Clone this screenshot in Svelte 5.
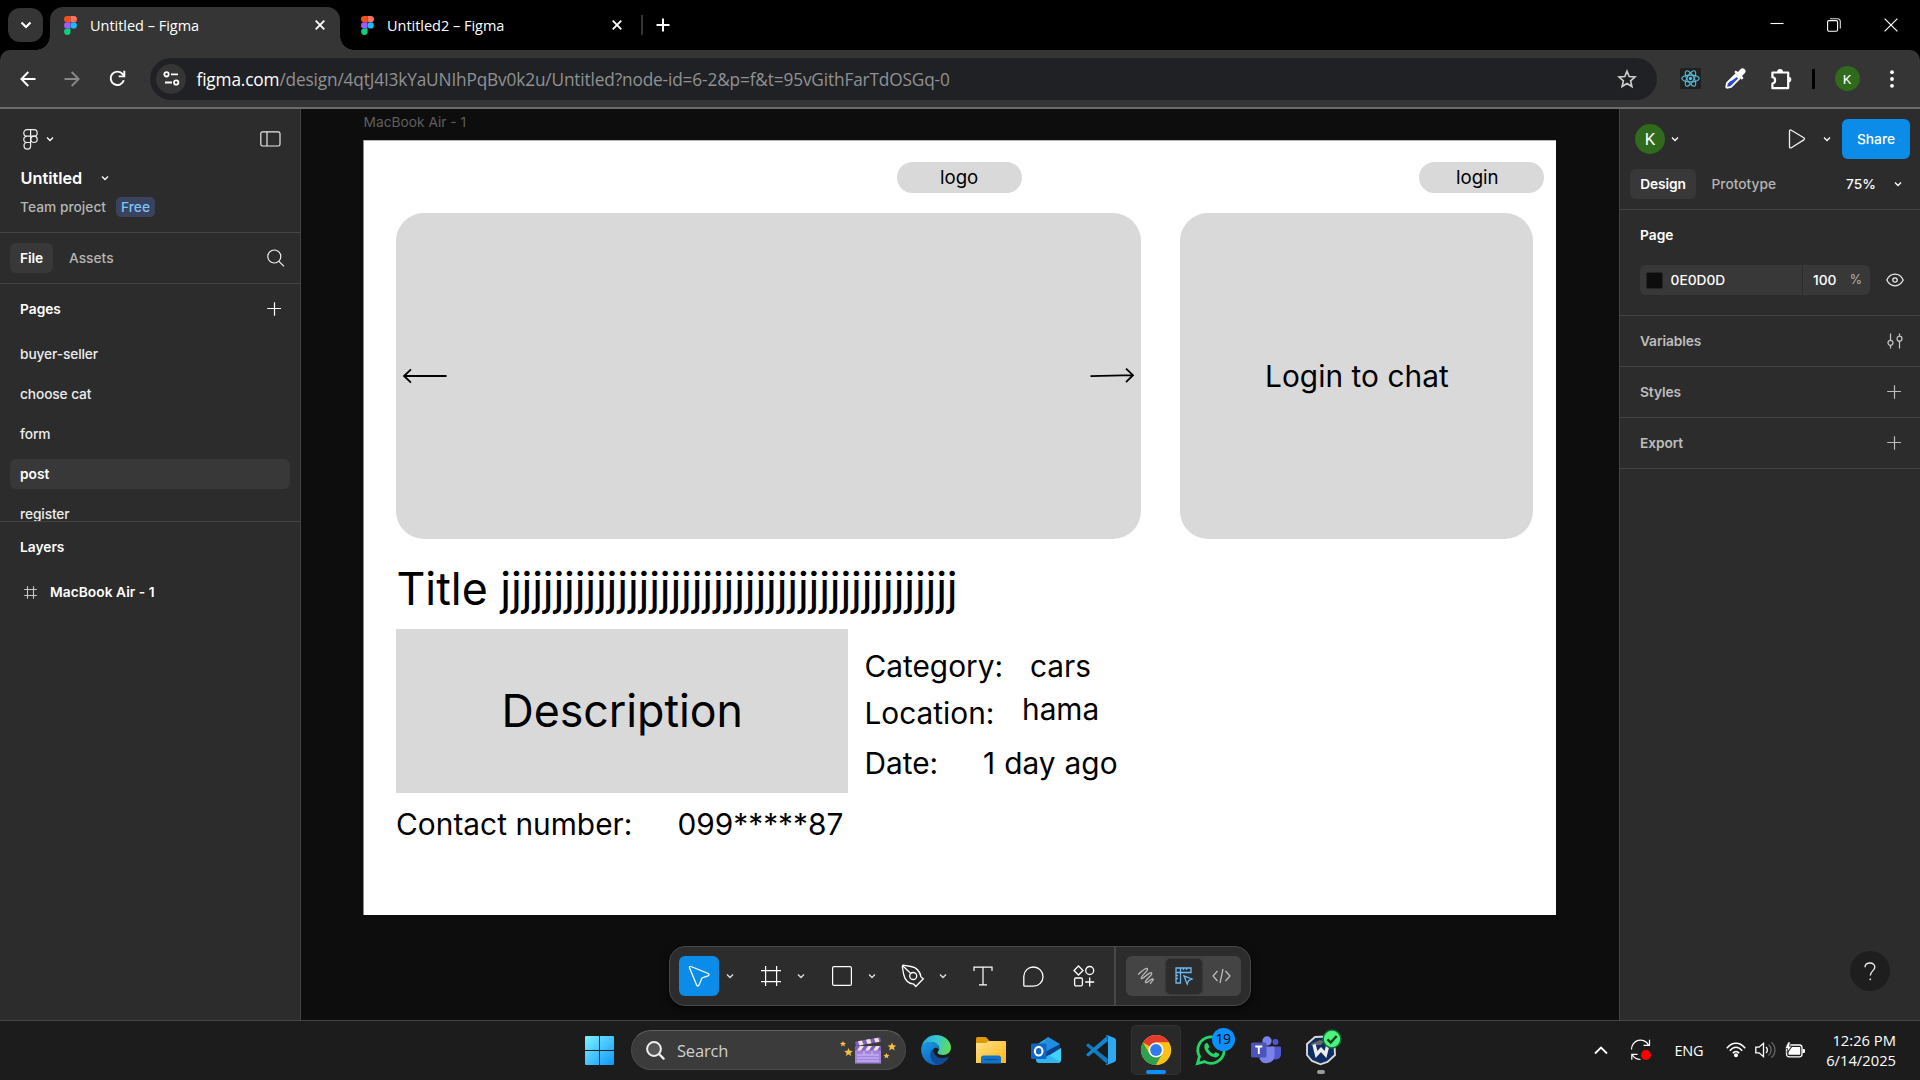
<script>
  const pages = ['buyer-seller', 'choose cat', 'form', 'post', 'register'];
  const activePage = 'post';
  const panelRows = ['Variables', 'Styles', 'Export'];
  const tabs = [
    { title: 'Untitled – Figma', active: true },
    { title: 'Untitled2 – Figma', active: false }
  ];
  const filler = 'j'.repeat(43);
</script>

{#snippet chevron()}
  <svg class="chev" width="8" height="8" viewBox="0 0 8 8"><path d="M1 2.5 4 5.5 7 2.5" fill="none" stroke="currentColor" stroke-width="1.3" /></svg>
{/snippet}

{#snippet plus()}
  <svg width="14" height="14" viewBox="0 0 14 14"><path d="M7.500 0.2V13.8M0.2 6.500H14" stroke="currentColor" stroke-width="1.2" /></svg>
{/snippet}

{#snippet figmaColor()}
  <svg width="13" height="19" viewBox="0 0 13 19">
    <path d="M3.2 0H6.5V6.3H3.2a3.15 3.15 0 0 1 0-6.3z" fill="#f24e1e" />
    <path d="M6.5 0H9.8a3.15 3.15 0 0 1 0 6.3H6.5z" fill="#ff7262" />
    <path d="M3.2 6.3H6.5v6.3H3.2a3.15 3.15 0 0 1 0-6.3z" fill="#a259ff" />
    <circle cx="9.7" cy="9.45" r="3.15" fill="#1abcfe" />
    <path d="M3.2 12.6H6.5v3.2a3.2 3.2 0 1 1-3.3-3.2z" fill="#0acf83" />
  </svg>
{/snippet}

<div class="screen">
  <header class="tabstrip">
    <div class="tabsearch"><svg width="12" height="8" viewBox="0 0 12 8"><path d="M1.5 1.5 6 6 10.5 1.5" fill="none" stroke="#fff" stroke-width="2.2" /></svg></div>
    {#each tabs as tab}
      <div class="tab" class:active={tab.active}>
        {@render figmaColor()}
        <span class="title">{tab.title}</span>
        <svg class="x" width="10" height="10" viewBox="0 0 10 10"><path d="M.7.7 9.3 9.3M9.3.7.7 9.3" stroke="#fff" stroke-width="1.8" /></svg>
      </div>
    {/each}
    <i class="tabsep"></i>
    <svg class="newtab" width="14" height="14" viewBox="0 0 14 14"><path d="M7 .5v13M.5 7h13" stroke="#fff" stroke-width="2" /></svg>
    <div class="winctl">
      <svg width="14" height="14" viewBox="0 0 14 14"><path d="M.5 5.500h13" stroke="#fff" stroke-width="1.1" /></svg>
      <svg width="14" height="14" viewBox="0 0 14 14"><rect x=".6" y="2.6" width="10" height="10.6" rx="1.5" fill="none" stroke="#fff" stroke-width="1.1" /><path d="M3 .7h7.5a2.8 2.8 0 0 1 2.8 2.8V10.500" fill="none" stroke="#ddd" stroke-width="1.1" /></svg>
      <svg width="14" height="14" viewBox="0 0 14 14"><path d="M.6.6 13.400 13.400M13.400.6.6 13.400" stroke="#fff" stroke-width="1.2" /></svg>
    </div>
  </header>

  <div class="toolbarwrap">
    <div class="addressrow">
      <svg class="back" width="16" height="16" viewBox="0 0 16 16"><path d="M15.500 8H2M8.300 1 1.400 8l6.900 7" fill="none" stroke="#fff" stroke-width="1.9" /></svg>
      <svg class="fwd" width="16" height="16" viewBox="0 0 16 16"><path d="M.5 8H14M7.700 1l6.900 7-6.900 7" fill="none" stroke="#888" stroke-width="1.9" /></svg>
      <svg class="reload" width="17" height="17" viewBox="0 0 17 17"><path d="M14.800 10.300A6.700 6.700 0 1 1 13.700 4.200L15.300 6" fill="none" stroke="#fff" stroke-width="1.9" /><path d="M15.300.8V6.400H9.700" fill="none" stroke="#fff" stroke-width="1.900" /></svg>
      <div class="omnibox">
        <div class="siteinfo">
          <svg width="17" height="15" viewBox="0 0 17 15" fill="none" stroke="#fff" stroke-width="1.800"><circle cx="3.500" cy="3.300" r="2.200" /><path d="M8 3.300h7M2 11.500h7" /><circle cx="13.200" cy="11.500" r="2.200" /></svg>
        </div>
        <span class="url"><b>figma.com</b>/design/4qtJ4I3kYaUNIhPqBv0k2u/Untitled?node-id=6-2&amp;p=f&amp;t=95vGithFarTdOSGq-0</span>
        <svg class="star" width="20" height="20" viewBox="0 0 20 20"><path d="M10 2.200 12.200 7.500 18 8l-4.400 3.800 1.300 5.700L10 14.500l-4.900 3 1.300-5.700L2 8l5.800-.5z" fill="none" stroke="#d0d0d0" stroke-width="1.600" /></svg>
      </div>
      <svg class="react" width="21" height="21" viewBox="0 0 21 21"><rect width="21" height="21" rx="1.500" fill="#202020" /><g fill="none" stroke="#53c1de" stroke-width="1.100"><ellipse cx="10.500" cy="10.500" rx="8.700" ry="3.400" /><ellipse cx="10.500" cy="10.500" rx="8.700" ry="3.400" transform="rotate(60 10.500 10.500)" /><ellipse cx="10.500" cy="10.500" rx="8.700" ry="3.400" transform="rotate(120 10.500 10.500)" /></g><circle cx="10.500" cy="10.500" r="1.700" fill="#53c1de" /></svg>
      <svg class="dropper" width="21" height="21" viewBox="0 0 21 21"><path d="M10.500 6.500 14.500 10.500 6 19 2 19.800 1.200 19 2 15z" fill="#2c48c8" stroke="#fff" stroke-width="1.800" /><path d="m4 13.500 6.500-7 2 2-5.500 4z" fill="#fff" /><path d="m9.300 4 1.500-1.500 2 1.500L15.500 1.200c1.300-1.300 3-1.300 4.200 0s1.200 2.700 0 4L17 8l1.500 2-1.700 1.700z" fill="#fff" /></svg>
      <svg class="puzzle" width="22" height="22" viewBox="0 0 22 22"><path d="M2.400 4.500H18.200V20.200H2.400V15.500c3.600-.3 3.600-6 0-6.300z" fill="none" stroke="#fff" stroke-width="2.200" stroke-linejoin="round" /><path d="M7.200 4a2.900 2.900 0 0 1 5.800 0zM18.500 8.800a2.600 2.600 0 0 1 0 5.600z" fill="#fff" /></svg>
      <i class="barsep"></i>
      <div class="avatar small">K</div>
      <svg class="kebab" width="4" height="18" viewBox="0 0 4 18" fill="#fff"><circle cx="2" cy="2.200" r="1.900" /><circle cx="2" cy="9" r="1.900" /><circle cx="2" cy="15.800" r="1.900" /></svg>
    </div>
  </div>

  <main>
    <aside class="left">
      <section class="filehead">
        <div class="row logo">
          <svg width="16" height="21" viewBox="0 0 16 21" fill="none" stroke="#f0f0f0" stroke-width="1.200"><path d="M7.600.7H4a3.200 3.200 0 0 0 0 6.400h3.600zM7.600.7H11a3.200 3.200 0 0 1 0 6.400H7.600zM7.600 7.100H4a3.200 3.200 0 0 0 0 6.400h3.600zM7.600 13.500H4a3.300 3.300 0 1 0 3.600 3.200z" /><circle cx="11" cy="10.300" r="3.200" /></svg>
          {@render chevron()}
          <svg class="end" width="21" height="16" viewBox="0 0 21 16" fill="none" stroke="#e8e8e8" stroke-width="1.200"><rect x=".8" y=".8" width="19.200" height="14.200" rx="1.800" /><path d="M7 .8V15" /></svg>
        </div>
        <div class="row name"><strong>Untitled</strong>{@render chevron()}</div>
        <div class="row team"><span>Team project</span><em>Free</em></div>
      </section>
      <section class="filetabs">
        <b>File</b><span>Assets</span>
        <svg width="18" height="18" viewBox="0 0 18 18" fill="none" stroke="#f0f0f0" stroke-width="1.200"><circle cx="7.300" cy="7.500" r="6.500" /><path d="m12 12.300 5 5" /></svg>
      </section>
      <section class="pages">
        <div class="head"><b>Pages</b>{@render plus()}</div>
        {#each pages as page}
          <div class="page" class:current={page === activePage}>{page}</div>
        {/each}
      </section>
      <section class="layers">
        <b>Layers</b>
        <div class="layer">
          <svg width="13" height="13" viewBox="0 0 13 13"><path d="M3.500.3v12.400M9.500.3v12.400M.2 3.500h12.600M.2 9.500h12.600" stroke="#c8c8c8" stroke-width="1.100" /></svg>
          <span>MacBook Air - 1</span>
        </div>
      </section>
    </aside>

    <div class="canvas">
      <span class="framelabel">MacBook Air - 1</span>
      <div class="frame">
        <div class="shape pill logo-pill"></div>
        <div class="shape pill login-pill"></div>
        <div class="shape round hero"></div>
        <div class="shape round chat"></div>
        <div class="shape desc"></div>
        <span class="t t-logo">logo</span>
        <span class="t t-login">login</span>
        <svg class="arrow prev" width="46" height="16" viewBox="0 0 46 16"><path d="M44.500 8H2M9 1.300 2 8l7 6.700" fill="none" stroke="#000" stroke-width="1.800" /></svg>
        <svg class="arrow next" width="46" height="16" viewBox="0 0 46 16"><path d="M.5 8.200 43 7.200M36 .7 43 7.200 36 14.200" fill="none" stroke="#000" stroke-width="1.800" /></svg>
        <span class="t t-chat">Login to chat</span>
        <span class="t big t-title">Title <span class="filler">{filler}</span></span>
        <span class="t big t-desc">Description</span>
        <span class="t t-cat">Category:</span>
        <span class="t t-cars">cars</span>
        <span class="t t-loc">Location:</span>
        <span class="t t-hama">hama</span>
        <span class="t t-date">Date:</span>
        <span class="t t-ago">1 day ago</span>
        <span class="t t-contact">Contact number:</span>
        <span class="t t-phone">099*****87</span>
      </div>

      <div class="tools">
        <div class="main">
          <div class="tool sel"><svg width="24" height="24" viewBox="0 0 24 24"><path d="M2.500 3.700c-.3-1 .5-1.600 1.500-1.200l17.200 7c1.200.6 1 2-.2 2.400l-6 2-3 7.200c-.5 1.200-1.900 1.200-2.400 0z" fill="none" stroke="#fff" stroke-width="1.300" /></svg></div>
          {@render chevron()}
          <div class="tool"><svg width="20" height="20" viewBox="0 0 20 20"><path d="M4.600 0v20M15.600 0v20M0 4.600h20M0 15.600h20" stroke="#fff" stroke-width="1.200" /></svg></div>
          {@render chevron()}
          <div class="tool"><svg width="20" height="20" viewBox="0 0 20 20"><rect x=".6" y=".6" width="18.800" height="18.800" rx="1.500" fill="none" stroke="#fff" stroke-width="1.200" /></svg></div>
          {@render chevron()}
          <div class="tool"><svg width="24" height="24" viewBox="0 0 24 24" fill="none" stroke="#fff" stroke-width="1.300"><path d="M2 1.200 10 2.500c6 1 9 5 10 10.500l2.300 1.800-7.500 7.700-2-2.300C7 19.500 4 16.500 2.700 10.500L1.300 2.500zM1.500 1.500l8 7.800" /><circle cx="12.200" cy="12" r="3.500" /></svg></div>
          {@render chevron()}
          <div class="tool"><svg width="20" height="20" viewBox="0 0 20 20"><path d="M1 5V1.200h18V5M10 1.200v17.600M6 18.800h8" fill="none" stroke="#fff" stroke-width="1.200" /></svg></div>
          <div class="tool"><svg width="21" height="21" viewBox="0 0 21 21"><path d="M.8 10.300a9.600 9.600 0 1 1 9.700 9.900H1.800a1 1 0 0 1-1-1z" fill="none" stroke="#fff" stroke-width="1.300" /></svg></div>
          <div class="tool"><svg width="22" height="22" viewBox="0 0 22 22" fill="none" stroke="#fff" stroke-width="1.300"><path d="M5.500 1 10 5.500 5.500 10 1 5.500z" /><circle cx="16.700" cy="5.500" r="4" /><rect x="1.600" y="13" width="7.800" height="7.800" rx="1.300" /><path d="M16.700 12.500v9M12.200 17h9" /></svg></div>
        </div>
        <div class="modes">
          <div class="seg">
            <div><svg width="18" height="18" viewBox="0 0 18 18"><path d="M1 7.500C4 5 8.500.5 10.300 1.500 12.300 3 3.200 9.500 4.300 11.300 5.500 13 12.500 4.500 14.500 5.800 16.500 7.500 7.300 13.500 8.500 15.300 9.700 17 13.500 11.500 15.800 11.800 17.800 12.500 12.800 15.300 13.500 17" fill="none" stroke="#bbb" stroke-width="1.300" /></svg></div>
            <div class="on"><svg width="18" height="18" viewBox="0 0 18 18" fill="none" stroke="#6bb8f5" stroke-width="1.300"><path d="M1 1H16V5.500H5.500V16H1zM5.500 1V5.500H1M8.500 1V3M11.500 1V3M1 8.500H3M1 11.500H3" /><path d="m9 8.800 8 3.200-3.400 1.600-1.400 3.600z" /></svg></div>
            <div><svg width="19" height="16" viewBox="0 0 19 16"><path d="M5.500 3 1 8l4.500 5M13.500 3 18 8l-4.500 5M11 1 8 15" fill="none" stroke="#c0c0c0" stroke-width="1.200" /></svg></div>
          </div>
        </div>
      </div>
    </div>

    <aside class="right">
      <section class="top">
        <div class="userrow">
          <div class="avatar">K</div>{@render chevron()}
          <svg class="play" width="18" height="20" viewBox="0 0 18 20"><path d="M1.500 2.300c0-1.200.8-1.700 1.800-1.100l12.500 7.600c.9.600.9 1.500 0 2.100L3.300 18.700c-1 .6-1.800.1-1.800-1z" fill="none" stroke="#f0f0f0" stroke-width="1.300" /></svg>
          {@render chevron()}
          <button>Share</button>
        </div>
        <div class="modesrow"><b>Design</b><span>Prototype</span><i>75%</i>{@render chevron()}</div>
      </section>
      <section class="pageprops">
        <b>Page</b>
        <div class="fillrow">
          <div class="hex"><i></i>0E0D0D</div>
          <div class="pct">100<em>%</em></div>
          <svg width="18" height="14" viewBox="0 0 18 14" fill="none" stroke="#f0f0f0" stroke-width="1.200"><path d="M.8 7C2.500 3.500 5.500 1.200 9 1.200S15.500 3.500 17.200 7c-1.700 3.500-4.700 5.800-8.200 5.800S2.500 10.500.8 7z" /><circle cx="9" cy="7" r="2.200" /></svg>
        </div>
      </section>
      {#each panelRows as label}
        <section class="prop">
          <span>{label}</span>
          {#if label === 'Variables'}
            <svg width="16" height="16" viewBox="0 0 16 16" fill="none" stroke="#c8c8c8" stroke-width="1.200"><circle cx="3.500" cy="9.800" r="2.500" /><path d="M3.500.5v6.800M3.500 12.300v3.200M12.500.5v2.200M12.500 7.700v7.800" /><circle cx="12.500" cy="5.700" r="2.500" /></svg>
          {:else}
            {@render plus()}
          {/if}
        </section>
      {/each}
      <div class="help"><svg width="12" height="19" viewBox="0 0 12 19"><path d="M1 5.200C1 2.500 3 1 6 1s4.800 1.600 4.800 4.200c0 3.500-4.500 4-4.500 8.300" fill="none" stroke="#f0f0f0" stroke-width="1.300" /><circle cx="6.300" cy="17.300" r=".9" fill="#f0f0f0" /></svg></div>
    </aside>
  </main>

  <footer class="taskbar">
    <div class="cell">
      <svg width="29" height="29" viewBox="0 0 29 29"><defs><linearGradient id="win" gradientUnits="userSpaceOnUse" x1="0" y1="0" x2="29" y2="29"><stop offset="0" stop-color="#7df2fd" /><stop offset="1" stop-color="#0f97fb" /></linearGradient></defs><path d="M1 0h13v14H0V1q0-1 1-1zM15 0h13q1 0 1 1v13H15zM0 15h14v14H1q-1 0-1-1zM15 15h14v13q0 1-1 1H15z" fill="url(#win)" /></svg>
    </div>
    <div class="search">
      <svg width="19" height="19" viewBox="0 0 19 19"><circle cx="8" cy="8" r="6.900" fill="#555" stroke="#eee" stroke-width="2" /><path d="m13 13 4.600 4.600" stroke="#eee" stroke-width="2.300" stroke-linecap="round" /></svg>
      <span>Search</span>
      <svg class="clap" width="56" height="27" viewBox="0 0 56 27">
        <rect x="15" y="9" width="26" height="17.500" fill="#a184dc" /><path d="M15 9h26v4.500H15z" fill="#7c62c4" /><path d="m17 13.500 3-4.500h4l-3 4.500zM25 13.500l3-4.500h4l-3 4.500zM33 13.500l3-4.500h4l-3 4.500z" fill="#f3dfd4" />
        <path d="M15 4.800 40 .3l1 4.200L16 9z" fill="#7c62c4" /><path d="m18 4.300 4-.8 1.500 4.200-4 .7zM26 2.800l4-.7 1.500 4.200-4 .7zM34 1.400l4-.7 1.500 4-4 .8z" fill="#f3dfd4" />
        <path d="M17 18h22M17 21h22M17 24h22M24 14v4M32 14v4" stroke="#d9c8f6" stroke-width=".9" />
        <g fill="#f5bf45"><path d="m8.500 11 1.300 2.700 3 .2-2.300 2 .8 3-2.800-1.600-2.600 1.600.6-3-2.200-2 3-.2z" /><path d="m52 5.500 1.200 2.700 3 .2-2.300 2 .8 3-2.800-1.600-2.600 1.600.6-3-2.200-2 3-.2z" /><path d="m3 4 .9 1.800 2.100.2-1.600 1.400.5 2L3 8.300l-1.900 1.100.5-2L0 6l2.100-.2z" /><path d="m46.500 16 .9 1.800 2.100.2-1.600 1.400.5 2-1.900-1.100-1.900 1.100.5-2-1.600-1.400 2.100-.2z" /></g>
      </svg>
    </div>
    <div class="apps">
      <div class="cell"><svg width="30" height="30" viewBox="0 0 30 30"><defs><linearGradient id="edgeA" x1="0" y1=".3" x2="1" y2=".5"><stop offset="0" stop-color="#29a8e8" /><stop offset=".5" stop-color="#36c6d4" /><stop offset="1" stop-color="#62dc52" /></linearGradient><linearGradient id="edgeB" x1="0" y1="0" x2=".6" y2="1"><stop offset="0" stop-color="#1b9de2" /><stop offset="1" stop-color="#0b62c4" /></linearGradient></defs>
        <path d="M.5 12.500C1.500 5.500 7.500 0 15 0c8.500 0 15 6 15 12.500 0 4.500-3.500 7.500-8 7.500-3 0-5.500-1-5.500-2.500 0-.8 1.800-1.700 1.800-4C18.300 10 14.500 7 10 7 5 7 1.500 9.500.5 12.500z" fill="url(#edgeA)" />
        <path d="M.2 13C1 9.500 5 7 9.500 7c4.300 0 8.500 2.700 8.500 6.300 0 .5 0 .9-.2 1.300C16.500 12 13.500 12 12 14.500c-2.500 5 2.500 13.500 11 13C20.500 29.200 18 30 15 30 6 30-.7 22 .2 13z" fill="url(#edgeB)" />
        <path d="M12.500 13.500c-1.200 6.500 5 10.500 11 9.500 2-.3 3.500-1 4.800-1.500C26.500 25.500 22 29 17.500 29.800 9.500 28 6.500 18 12.500 13.500z" fill="#134a94" /></svg></div>
      <div class="cell"><svg width="30" height="27" viewBox="0 0 30 27"><defs><linearGradient id="fold" x1="0" y1="0" x2="1" y2="1"><stop offset="0" stop-color="#ffe08a" /><stop offset="1" stop-color="#fdb813" /></linearGradient></defs><path d="M0 1.500Q0 0 1.500 0H9q1 0 2 1l2.500 3H29v8H0z" fill="#dc9a08" /><path d="M0 6h9q1.500 0 2.500-1T14 4H29q1 0 1 1V26H0z" fill="url(#fold)" /><path d="M5 26.500V21q0-2.500 2.500-2.500h15Q25 18.500 25 21v5.500z" fill="#1173c8" /><path d="M8.500 22.500h13" stroke="#0a4f94" /></svg></div>
      <div class="cell"><svg width="30" height="27" viewBox="0 0 30 27"><path d="M5 8 17 .3 29 7.500V12L17 19 5 14z" fill="#2ba3e6" /><path d="M17 0 29 7 14 16 8 12z" fill="#1f8fe0" /><path d="M29 7v6L18 20l-6-4z" fill="#0d3f8f" /><path d="M30 11v12q0 3-3 3H9q-4 0-4-4l12-3z" fill="#41d2f7" /><path d="M5 22q6 1 13-4l11 7q-1 1-3 1H9q-4 0-4-4z" fill="#31b5f1" /><rect y="6.500" width="15.500" height="15.500" rx="1.500" fill="#1066c2" /><ellipse cx="7.700" cy="14.200" rx="3.800" ry="4.300" fill="none" stroke="#fff" stroke-width="2.100" /></svg></div>
      <div class="cell"><svg width="30" height="30" viewBox="0 0 30 30"><path d="M2.500 8.500 22 24l-1 5L.8 11.200q-1-1 0-1.900L2 8.500z" fill="#0f79bf" /><path d="M2.500 21.500 22 6l-1-5L.8 18.800q-1 1 0 1.900z" fill="#1086d0" /><path d="M21.500.2 28.500 3q1.500.8 1.500 2.300V24.700q0 1.500-1.500 2.300l-7 2.800q-1 .2-2-.9 2.500.8 2.500-1.700V2.800q0-2.500-2.500-1.700 1-1.100 2-.9z" fill="#2fa8f2" /></svg></div>
      <div class="cell active"><svg width="30" height="30" viewBox="0 0 30 30"><circle cx="15" cy="15" r="15" fill="#fbc116" /><path d="M15 15 2 7.500A15 15 0 0 1 28 7.500H15z" fill="#e33b2e" /><path d="M2 7.500A15 15 0 0 0 15 30L21.500 18.700 15 22 8.500 18.700z" fill="#2da14b" /><path d="M15 7.500h13A15 15 0 0 1 15 30l6.500-11.300z" fill="#fbc116" /><circle cx="15" cy="15" r="7.500" fill="#fff" /><circle cx="15" cy="15" r="5.900" fill="#3079ef" /></svg><i class="bar"></i></div>
      <div class="cell"><svg width="30" height="30" viewBox="0 0 30 30"><path d="m1.500 28.500 2-7A13.200 13.200 0 1 1 8.600 26.600z" fill="none" stroke="#25d366" stroke-width="2.800" /><path d="M8.500 10c1-2.500 3-2.500 3.500-1.200l1.200 2.800c.2.800-1.500 2-1 2.700 1.300 2.200 3 3.700 5.200 4.500.8.200 1.600-1.900 2.500-1.600l2.800 1.400c1.400.9-.3 3.300-2 3.700C15.500 23.500 7 16 8.500 10z" fill="#25d366" /></svg><span class="badge">19</span></div>
      <div class="cell"><svg width="30" height="28" viewBox="0 0 30 28"><circle cx="24.500" cy="6" r="3" fill="#5059c9" /><circle cx="16" cy="5" r="4.700" fill="#7b83eb" /><path d="M20 10.500h9q1 0 1 1V18a5.500 5.500 0 0 1-8 5z" fill="#5059c9" /><path d="M10 10.500h12.500q1 0 1 1V19a8 8 0 0 1-15 4z" fill="#7b83eb" /><rect y="6.500" width="15.500" height="15" rx="1.500" fill="#4b53bc" /><path d="M4.300 10.500h7M7.800 10.500v7.500" stroke="#fff" stroke-width="1.900" /></svg></div>
      <div class="cell"><svg width="30" height="30" viewBox="0 0 30 30"><path d="m9 2 12-.5L28.500 9 29 20l-7.500 7-7 2.300L6 26 1 20V9z" fill="#0e2d62" stroke="#d8d8d8" stroke-width="1.900" /><path d="M5 9 14 5l4 1-3 4H5z" fill="#666" /><path d="m8 9.500 2.500 10 4.500-5 4.500 5 2.500-10" fill="none" stroke="#ececec" stroke-width="3.400" /></svg><svg class="check" width="20" height="20" viewBox="0 0 20 20"><circle cx="10" cy="10" r="8.900" fill="#4cf47c" stroke="#126b35" stroke-width="1.500" /><path d="m5.500 10.300 3.200 3.200 6-6.500" fill="none" stroke="#073d1b" stroke-width="2.400" /></svg><i class="dot"></i></div>
    </div>
    <div class="tray">
      <svg class="up" width="14" height="9" viewBox="0 0 14 9"><path d="M1 7.500 7 1.500l6 6" fill="none" stroke="#fff" stroke-width="1.800" /></svg>
      <svg class="sync" width="22" height="22" viewBox="0 0 22 22"><path d="M1.500 10.500A9 9 0 0 1 18.500 6M19.500.8V6.300H13.500M10.500 20.500C6.500 20.500 4 19 2.300 15.800M1.800 20.800V15.300H7.500" fill="none" stroke="#fff" stroke-width="1.200" /><circle cx="16" cy="16" r="5" fill="#f00" /></svg>
      <span class="lang">ENG</span>
      <svg class="wifi" width="20" height="16" viewBox="0 0 20 16" fill="none" stroke="#fff" stroke-width="1.500"><path d="M.8 6.200C6-.5 14-.5 19.200 6.200M3.800 8.800C7.500 4 12.500 4 16.200 8.800M6.800 11.300C8.700 8.800 11.300 8.800 13.200 11.300" /><circle cx="10" cy="13.300" r="1.300" fill="#fff" /></svg>
      <svg class="vol" width="20" height="18" viewBox="0 0 20 18" fill="none" stroke="#fff" stroke-width="1.300"><path d="M.8 6.200H4L8.500 2.300V15.700L4 11.800H.8zM11 6a4 4 0 0 1 0 6" /><path d="M13.500 3.500a7 7 0 0 1 0 11M16.300 1.300a10 10 0 0 1 0 15.400" stroke="#666" /></svg>
      <svg class="bat" width="20" height="16" viewBox="0 0 20 16"><rect x="1.500" y="3" width="15.500" height="11.800" rx="2.500" fill="none" stroke="#fff" stroke-width="1.300" /><path d="M7 5h8.200v7.800H3.500V10zM17.500 7H19q1 0 1 1v2q0 1-1 1h-1.500z" fill="#fff" /><path d="M3 0 0 6.500h2.500L2 10.500 6.800 4.200H4.200L5.500 0z" fill="#fff" stroke="#1c1c1c" stroke-width=".7" /></svg>
      <div class="clock"><span>12:26 PM</span><span>6/14/2025</span></div>
    </div>
  </footer>
</div>

<style>
  :global(body) { margin: 0; background: #000; }
  .screen { width: 1920px; height: 1080px; overflow: hidden; display: flex; flex-direction: column; background: #000; font-family: Inter, "Liberation Sans", sans-serif; font-size: 13.75px; color: #fff; }
  svg { display: block; flex: none; overflow: visible; }
  b, strong { font-weight: 600; }
  i, em { font-style: normal; }
  .screen div, .screen section, .screen aside { box-sizing: border-box; }

  .tabstrip { height: 50px; flex: none; display: flex; align-items: center; padding-left: 8px; font-family: "Open Sans", "Noto Sans", sans-serif; }
  .tabsearch { width: 35px; height: 34px; border-radius: 12px; background: #353535; display: flex; align-items: center; justify-content: center; margin-right: 7px; }
  .tab { position: relative; width: 290px; height: 43px; align-self: flex-end; display: flex; align-items: center; padding: 0 15px 7px 14px; font-size: 14.5px; margin-right: 7px; }
  .tab.active { background: #353535; border-radius: 13px 13px 0 0; }
  .tab.active::before, .tab.active::after { content: ""; position: absolute; bottom: 0; width: 14px; height: 14px; }
  .tab.active::before { left: -14px; background: radial-gradient(circle at 0 0, transparent 13.500px, #353535 14px); }
  .tab.active::after { right: -14px; background: radial-gradient(circle at 100% 0, transparent 13.500px, #353535 14px); }
  .tab .title { margin-left: 13px; letter-spacing: -0.02px; white-space: nowrap; line-height: 20px; padding-top: 1px; }
  .tab .x { margin-left: auto; }
  .tabsep { width: 2px; height: 20px; background: #353535; margin-left: 3px; }
  .tab + .tabsep { margin-left: -3px; }
  .newtab { margin-left: 13px; }
  .winctl { margin-left: auto; display: flex; gap: 43px; padding-right: 22px; }

  .toolbarwrap { height: 59px; flex: none; background: #000; }
  .addressrow { height: 59px; box-sizing: border-box; background: #353535; border-bottom: 2px solid #6b6b6b; border-radius: 10px 10px 0 0; display: flex; align-items: center; padding-left: 20px; }
  .fwd { margin-left: 28px; }
  .reload { margin-left: 29px; }
  .omnibox { width: 1507px; height: 42px; margin-left: 24px; border-radius: 21px; background: #202124; display: flex; align-items: center; padding: 0 20px 0 6px; color: #8f9194; font-family: "Open Sans", "Noto Sans", sans-serif; font-size: 17.250px; }
  .siteinfo { width: 30px; height: 30px; border-radius: 50%; background: #353535; display: flex; align-items: center; justify-content: center; }
  .url { margin-left: 10.500px; letter-spacing: -0.150px; white-space: nowrap; padding-top: 1px; }
  .url b { font-weight: 400; color: #fff; }
  .star { margin-left: auto; }
  .react { margin-left: 23px; }
  .dropper { margin-left: 24px; }
  .puzzle { margin-left: 24px; }
  .barsep { width: 2.500px; height: 20px; background: #000; margin-left: 20px; }
  .avatar { width: 30px; height: 30px; border-radius: 50%; background: #306a1d; display: flex; align-items: center; justify-content: center; font-family: Roboto, sans-serif; font-size: 16.500px; }
  .avatar.small { width: 25px; height: 25px; margin-left: 20px; font-size: 13.500px; }
  .kebab { margin-left: 30px; }

  main { height: 911px; flex: none; display: flex; background: #0e0d0d; }
  .left { width: 301px; border-right: 1px solid #444; background: #2c2c2c; display: flex; flex-direction: column; }
  .left section { border-bottom: 1px solid #444; }
  .row { display: flex; align-items: center; }
  .filehead { height: 124px; padding: 18px 20px 0; }
  .logo { height: 24px; padding-left: 3px; }
  .logo .chev { margin-left: 7px; }
  .end { margin-left: auto; margin-right: -0.500px; }
  .name { height: 24px; margin-top: 15px; font-size: 16.250px; letter-spacing: 0; padding-left: 0.500px; }
  .name .chev { margin-left: auto; margin-right: 171px; }
  .team { margin-top: 7px; height: 20px; color: #b5b5b5; font-weight: 450; letter-spacing: 0.02px; }
  .team em { margin-left: auto; margin-right: 125px; height: 20px; width: 39px; line-height: 20px; text-align: center; background: #394360; color: #7cc4f8; border-radius: 5px; }
  .filetabs { height: 51px; display: flex; align-items: center; padding: 0 15px 0 10px; }
  .filetabs b, .modesrow b { height: 30px; line-height: 30px; background: #383838; border-radius: 6px; text-align: center; letter-spacing: -0.15px; }
  .filetabs b { width: 43px; }
  .filetabs span { margin-left: 16px; color: #b5b5b5; font-weight: 500; }
  .filetabs svg { margin-left: auto; }
  .pages { height: 238px; overflow: hidden; padding: 0 10px; letter-spacing: -0.1px; }
  .pages .head { height: 50px; display: flex; align-items: center; justify-content: space-between; padding: 0 9px 0 10px; letter-spacing: 0; }
  .page { height: 30px; line-height: 30px; padding-left: 10px; margin-bottom: 10px; border-radius: 6px; font-weight: 500; color: #ececec; letter-spacing: -0.12px; }
  .page:nth-child(2) { margin-top: 5px; }
  .page.current { background: #383838; color: #fff; font-weight: 600; letter-spacing: 0; }
  .left .layers { border: 0; padding: 15px 20px; line-height: 20px; }
  .layer { display: flex; align-items: center; margin-top: 25px; padding-left: 4px; font-weight: 600; letter-spacing: 0.05px; }
  .layer span { margin-left: 13px; }

  .canvas { position: relative; width: 1318px; color: #000; }
  .framelabel { position: absolute; left: 62.500px; top: 5px; line-height: 17px; font-size: 13.750px; color: #5f5f5f; }
  .frame { position: absolute; left: 62px; top: 31px; width: 1193px; height: 775px; background: #fff; box-shadow: inset 1px 0 #8a8a8a, inset 0 1px #b8b8b8; }
  .shape { position: absolute; background: #d9d9d9; }
  .pill { width: 125px; height: 31px; top: 22px; border-radius: 16px; }
  .logo-pill { left: 534px; }
  .login-pill { left: 1056px; }
  .round { top: 73px; height: 326px; border-radius: 28px; }
  .hero { left: 33px; width: 745px; }
  .chat { left: 817px; width: 353px; }
  .desc { left: 33px; top: 489px; width: 452px; height: 164px; }
  .arrow { position: absolute; top: 228px; }
  .prev { left: 39px; }
  .next { left: 727px; }
  .t { position: absolute; line-height: 1; white-space: nowrap; font-size: 29.820px; }
  .t-logo, .t-login { font-size: 18.640px; top: 28px; }
  .t-logo { left: 577px; }
  .t-login { left: 1093px; }
  .t-chat { left: 902px; top: 222px; letter-spacing: 0.05px; }
  .big { font-size: 44.730px; }
  .t-title { left: 33.500px; top: 427px; }
  .filler { letter-spacing: -0.200px; }
  .t-desc { left: 138.500px; top: 549px; letter-spacing: -0.05px; }
  .t-cat { left: 501.500px; top: 512.300px; }
  .t-cars { left: 667px; top: 512.300px; }
  .t-loc { left: 501.500px; top: 559.300px; }
  .t-hama { left: 659px; top: 555.300px; }
  .t-date { left: 501.500px; top: 609.300px; }
  .t-ago { left: 620px; top: 609.300px; word-spacing: 0.700px; }
  .t-contact { left: 33px; top: 670.300px; letter-spacing: 0.04px; }
  .t-phone { left: 314.500px; top: 670.300px; }

  .tools { position: absolute; left: 368px; top: 837px; width: 582px; height: 60px; background: #2c2c2c; border: 1px solid #484848; border-radius: 16px; display: flex; color: #e0e0e0; box-shadow: 0 3px 8px rgba(0, 0, 0, .6); }
  .tools .main { width: 446px; border-right: 2px solid #484848; display: flex; align-items: center; padding-left: 9px; flex: none; }
  .tool { width: 40px; height: 40px; border-radius: 6px; display: flex; align-items: center; justify-content: center; margin-left: 17px; }
  .tool.sel { background: #0c8ce9; margin-left: 0; }
  .main .chev { margin-left: 6px; margin-right: 0; }
  .main .sel + .chev { margin-left: 7px; }
  .tool + .tool { margin-left: 10.300px; }
  .main .chev + .tool:nth-last-child(3) { margin-left: 16px; }
  .modes { display: flex; align-items: center; padding-left: 10px; }
  .seg { width: 115px; height: 40px; background: #444; border-radius: 6px; display: flex; align-items: center; justify-content: space-between; padding: 0 2px; }
  .seg div { width: 36px; height: 35px; display: flex; align-items: center; justify-content: center; border-radius: 5px; }
  .seg .on { background: #2c2c2c; box-shadow: 0 0 2px #222; }

  .right { position: relative; width: 301px; background: #2c2c2c; border-left: 1px solid #444; }
  .right section { border-bottom: 1px solid #444; }
  .top { height: 101px; padding-top: 10px; }
  .userrow { height: 40px; display: flex; align-items: center; padding: 0 10px 0 15px; }
  .userrow .chev { margin-left: 17px; }
  .userrow .avatar + .chev { margin-left: 6px; }
  .play { margin-left: auto; }
  button { width: 68px; height: 40px; margin-left: 11px; border: 0; border-radius: 6px; background: #0c8ce9; color: #fff; font: 500 13.750px Inter, sans-serif; padding: 0; }
  .modesrow { height: 30px; margin-top: 10px; display: flex; align-items: center; padding: 0 18px 0 10px; }
  .modesrow b { width: 66px; }
  .modesrow span { margin-left: 15.500px; color: #b5b5b5; font-weight: 450; }
  .modesrow i { margin-left: auto; margin-right: 18px; font-weight: 500; }
  .pageprops { height: 106px; padding: 15px 16px 0 20px; line-height: 20px; }
  .fillrow { display: flex; align-items: center; margin-top: 20px; height: 30px; font-weight: 500; }
  .hex { display: flex; align-items: center; width: 162px; height: 30px; background: #383838; border-radius: 6px 0 0 6px; padding-left: 6px; }
  .hex i { width: 17px; height: 17px; background: #0e0d0d; border: 1px solid #262626; border-radius: 2px; box-sizing: border-box; margin-right: 7.500px; }
  .pct { display: flex; align-items: center; margin-left: 1px; width: 67px; height: 30px; background: #383838; border-radius: 0 6px 6px 0; padding: 0 8px 0 10px; justify-content: space-between; }
  .pct em { color: #b5b5b5; font-weight: 400; font-size: 12.500px; }
  .fillrow svg { margin-left: auto; }
  .prop { height: 51px; display: flex; align-items: center; justify-content: space-between; padding: 0 19px 0 20px; color: #bdbdbd; font-weight: 600; letter-spacing: -0.1px; }
  .prop:nth-child(3) { padding-right: 17px; }
  .help { position: absolute; right: 30px; bottom: 29px; width: 40px; height: 40px; border-radius: 50%; background: #1e1e1e; display: flex; align-items: center; justify-content: center; }

  .taskbar { height: 60px; box-sizing: border-box; flex: none; background: #1c1c1c; border-top: 1px solid #444; display: flex; align-items: center; padding: 0 24px 1px 572px; font-family: "Open Sans", "Noto Sans", sans-serif; }
  .cell { position: relative; width: 55px; height: 50px; display: flex; align-items: center; justify-content: center; }
  .cell.active::before { content: ""; position: absolute; inset: 0 2.500px; background: #292929; border: 1px solid #303030; border-radius: 5px; }
  .cell > svg { position: relative; }
  .search { width: 275px; height: 40px; margin-left: 4px; border-radius: 20px; background: #3b3b3b; border: 1px solid #4b4b4b; border-top-color: #626262; display: flex; align-items: center; padding: 0 9px 0 14px; }
  .search span { margin-left: 12px; font-size: 16.500px; color: #d0d0d0; letter-spacing: -0.2px; }
  .clap { margin-left: auto; }
  .apps { display: flex; margin-left: 2.500px; }
  .bar, .dot { position: absolute; bottom: 1px; height: 4px; border-radius: 2px; }
  .bar { left: 17.500px; width: 20px; background: #0a90ff; }
  .dot { left: 23.500px; width: 8px; background: #999; }
  .badge { position: absolute; left: 28px; top: 2.500px; width: 23px; height: 23px; line-height: 22px; background: #0a90ff; border-radius: 50%; color: #000; font-size: 14px; text-align: center; letter-spacing: -0.5px; }
  .cell > svg.check { position: absolute; left: 28.500px; top: 4px; }
  .tray { margin-left: auto; display: flex; align-items: center; }
  .sync { margin-left: 22px; }
  .lang { margin-left: 22.500px; width: 30.500px; font-size: 14.500px; letter-spacing: -0.2px; }
  .wifi { margin-left: 21px; }
  .vol { margin-left: 9px; }
  .bat { margin-left: 10px; }
  .clock { width: 91px; text-align: right; font-size: 14.750px; line-height: 20px; letter-spacing: 0; display: flex; flex-direction: column; margin-top: -1px; }
</style>
